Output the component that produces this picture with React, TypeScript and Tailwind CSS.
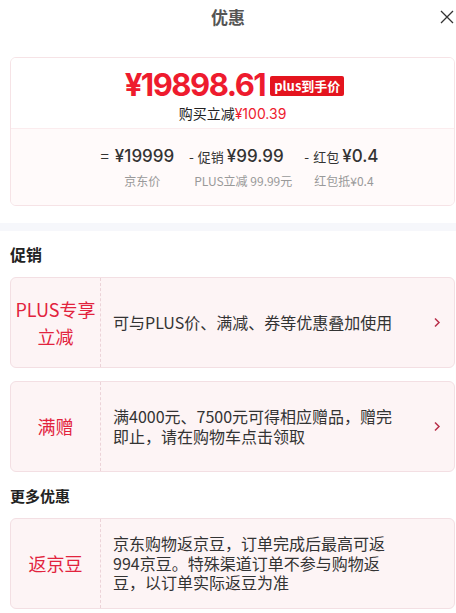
const font = "font-['Microsoft_YaHei','Noto_Sans_CJK_SC',sans-serif]";

const PromoCard = ({ label, text, arrow = true }: { label: React.ReactNode; text: string; arrow?: boolean }) => (
  <div className="flex h-[91px] rounded-[6px] border border-[#f3dfe3] bg-[#fdf4f5]">
    <div className="flex w-[90px] shrink-0 items-center justify-center border-r border-dashed border-[#ecd3d8] text-center text-[18px] leading-[27px] text-[#e2233d]">
      {label}
    </div>
    <div className="flex flex-1 items-center pl-[12px] text-[16px] leading-[19.5px] text-[#333]">
      <span className="w-[283px]">{text}</span>
    </div>
    {arrow && (
      <div className="flex w-[34px] shrink-0 items-center justify-center">
        <svg width="8" height="11" viewBox="0 0 8 11" fill="none">
          <path d="M2 1.5 6 5.5 2 9.5" stroke="#b8304a" strokeWidth="1.5" />
        </svg>
      </div>
    )}
  </div>
);

export default function App() {
  return (
    <div className={`${font} h-[613px] w-[456px] overflow-hidden bg-white`}>
      {/* header */}
      <div className="relative flex h-[33px] items-center justify-center">
        <span className="text-[17px] font-bold text-[#555]">优惠</span>
        <svg className="absolute right-[2px] top-[10px]" width="14" height="14" viewBox="0 0 14 14">
          <path d="M1 1 13 13M13 1 1 13" stroke="#333" strokeWidth="1.3" />
        </svg>
      </div>

      {/* price card */}
      <div className="mt-[24px] pl-[10px] pr-[1px]">
        <div className="overflow-hidden rounded-[6px] border border-[#f6e3e6]">
          <div className="flex h-[70px] flex-col items-center bg-white pt-[8px]">
            <div className="flex items-center gap-[5px] pl-[4px]">
              <span className="font-['Inter',sans-serif] text-[31px] font-bold leading-[38px] tracking-[-1.5px] text-[#ee1b2e]">
                ¥19898.61
              </span>
              <span className="mt-[1px] rounded-[2px] bg-[#e4141e] px-[4px] text-[13px] font-bold leading-[20px] text-white">
                plus到手价
              </span>
            </div>
            <div className="text-[14px] leading-[18px] text-[#222]">
              购买立减<span className="font-['Inter',sans-serif] text-[#ee1b2e]">¥100.39</span>
            </div>
          </div>
          <div className="flex h-[77px] justify-center border-t border-[#fbecee] bg-[#fffafa] pt-[15px] pl-[14px]">
            <div className="flex flex-col items-center">
              <div className="flex items-baseline text-[#333]">
                <span className="mr-[6px] text-[15px]">=</span>
                <span className="font-['Inter',sans-serif] text-[17px] font-medium leading-[24px]">¥19999</span>
              </div>
              <div className="mt-[4px] pl-[10px] text-[12px] text-[#999]">京东价</div>
            </div>
            <div className="ml-[6px] flex flex-col items-center">
              <div className="flex items-baseline text-[#333]">
                <span className="mr-[4px] text-[14px]">-</span>
                <span className="mr-[3px] text-[13px]">促销</span>
                <span className="font-['Inter',sans-serif] text-[17px] font-medium leading-[24px]">¥99.99</span>
              </div>
              <div className="mt-[4px] pl-[14px] text-[12px] text-[#999]">PLUS立减 99.99元</div>
            </div>
            <div className="ml-[12px] flex flex-col items-start">
              <div className="flex items-baseline text-[#333]">
                <span className="mr-[4px] text-[14px]">-</span>
                <span className="mr-[3px] text-[13px]">红包</span>
                <span className="font-['Inter',sans-serif] text-[17px] font-medium leading-[24px]">¥0.4</span>
              </div>
              <div className="mt-[4px] pl-[10px] text-[12px] text-[#999]">红包抵¥0.4</div>
            </div>
          </div>
        </div>
      </div>

      {/* divider band */}
      <div className="mt-[17px] h-[8px] bg-[#f6f7fb]" />

      {/* promotions */}
      <div className="pl-[10px] pr-[1px]">
        <div className="pt-[13px] pb-[13px] text-[16px] font-bold leading-[20px] text-[#222]">促销</div>
        <div className="flex flex-col gap-[13px]">
          <PromoCard
            label={
              <span>
                PLUS专享
                <br />
                立减
              </span>
            }
            text="可与PLUS价、满减、券等优惠叠加使用"
          />
          <PromoCard label="满赠" text="满4000元、7500元可得相应赠品，赠完即止，请在购物车点击领取" />
        </div>

        <div className="pt-[14px] pb-[12px] text-[15px] font-bold leading-[20px] text-[#222]">更多优惠</div>
        <PromoCard
          arrow={false}
          label="返京豆"
          text="京东购物返京豆，订单完成后最高可返994京豆。特殊渠道订单不参与购物返豆，以订单实际返豆为准"
        />
      </div>
    </div>
  );
}
